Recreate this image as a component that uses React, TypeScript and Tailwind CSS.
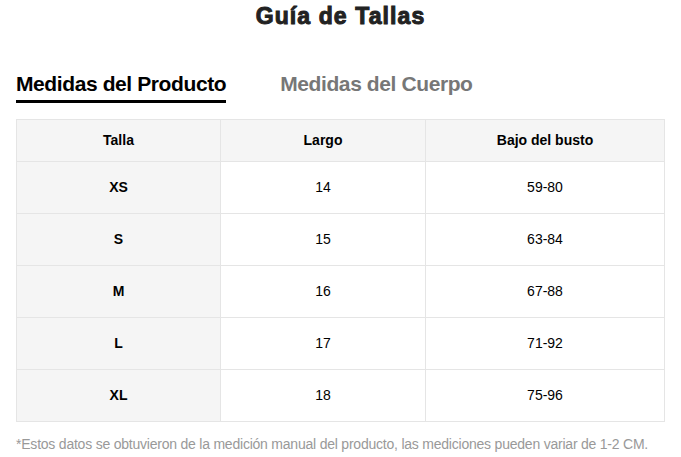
const rows = [
  { talla: 'XS', largo: '14', busto: '59-80' },
  { talla: 'S', largo: '15', busto: '63-84' },
  { talla: 'M', largo: '16', busto: '67-88' },
  { talla: 'L', largo: '17', busto: '71-92' },
  { talla: 'XL', largo: '18', busto: '75-96' },
]

export default function App() {
  return (
    <div className="min-h-screen bg-white px-4 font-['Liberation_Sans',Arial,sans-serif] text-black">
      <h1 className="pt-[3px] text-center text-[23px] font-bold leading-[27px] tracking-[1.1px] text-[#222] [-webkit-text-stroke:1px_#222]">
        Guía de Tallas
      </h1>

      <div className="mt-[40px] flex gap-[54px]">
        <div className="border-b-[3px] border-black pb-[2px] text-[21px] font-bold leading-[28px] tracking-[-0.4px]">
          Medidas del Producto
        </div>
        <div className="text-[21px] font-bold leading-[28px] tracking-[-0.4px] text-[#777]">Medidas del Cuerpo</div>
      </div>

      <table className="mt-[16px] w-full table-fixed border-collapse text-[14px]">
        <colgroup>
          <col className="w-[204px]" />
          <col className="w-[205px]" />
          <col />
        </colgroup>
        <thead>
          <tr className="h-[42px] bg-[#f5f5f5]">
            <th className="border border-[#e5e5e5] font-bold">Talla</th>
            <th className="border border-[#e5e5e5] font-bold">Largo</th>
            <th className="border border-[#e5e5e5] font-bold">Bajo del busto</th>
          </tr>
        </thead>
        <tbody>
          {rows.map((r) => (
            <tr key={r.talla} className="h-[52px]">
              <td className="border border-[#e5e5e5] bg-[#f5f5f5] text-center font-bold">{r.talla}</td>
              <td className="border border-[#e5e5e5] text-center">{r.largo}</td>
              <td className="border border-[#e5e5e5] text-center">{r.busto}</td>
            </tr>
          ))}
        </tbody>
      </table>

      <p className="mt-[13px] text-[14px] leading-[18px] tracking-[-0.22px] text-[#999]">
        *Estos datos se obtuvieron de la medición manual del producto, las mediciones pueden variar de 1-2 CM.
      </p>
    </div>
  )
}
